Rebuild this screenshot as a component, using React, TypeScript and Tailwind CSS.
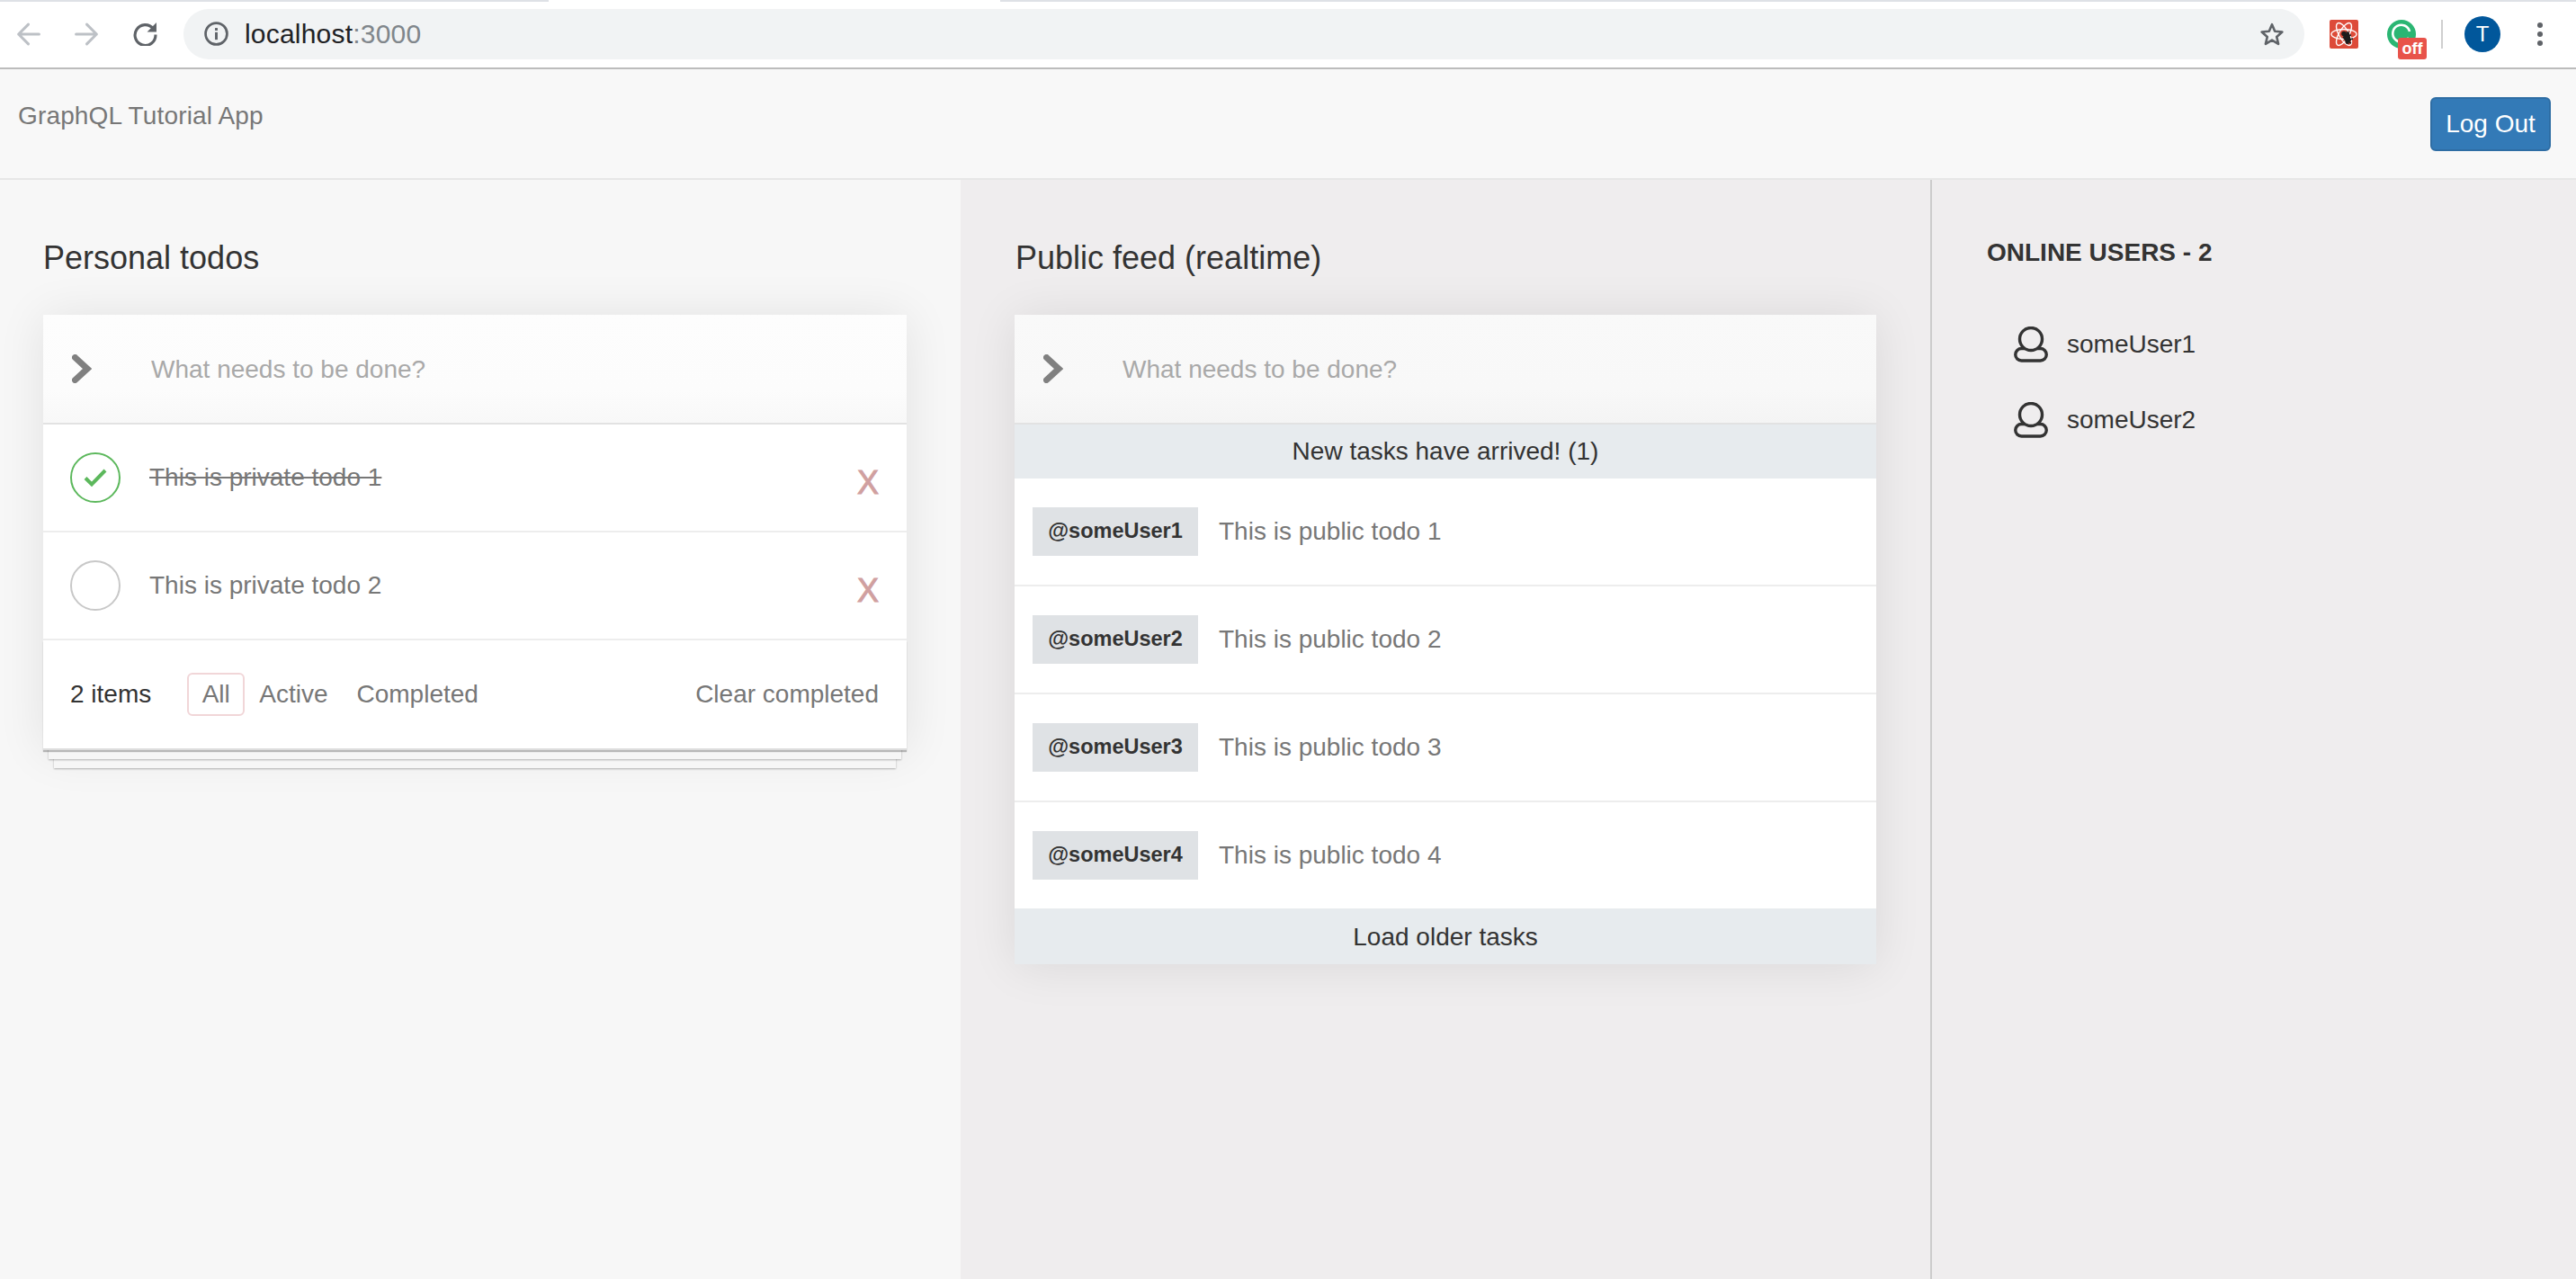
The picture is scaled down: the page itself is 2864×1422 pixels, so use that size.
import { useState } from "react";

const font = "font-['Liberation_Sans',Arial,sans-serif]";

const cardShadow = "shadow-[0_2px_50px_rgba(0,0,0,0.09)]";

function ChevronMark() {
  return (
    <svg width="22" height="32" viewBox="0 0 22 32" className="shrink-0">
      <path d="M3.5 3.5 L17 16 L3.5 28.5" fill="none" stroke="#808080" strokeWidth="7" strokeLinejoin="miter" strokeLinecap="round" />
    </svg>
  );
}

function TodoInput({ bg }: { bg: string }) {
  return (
    <div className={`flex h-[122px] items-center border-b-2 border-[#e2e2e2] pl-8 ${bg}`}>
      <ChevronMark />
      <input
        readOnly
        placeholder="What needs to be done?"
        className="ml-[66px] flex-1 bg-transparent pt-[2px] text-[28px] outline-none placeholder:text-[#a9a9a9]"
      />
    </div>
  );
}

function BrowserBar() {
  return (
    <div className="shrink-0 bg-white">
      <div className="flex h-[2px]">
        <div className="w-[610px] bg-[#dee1e6]" />
        <div className="w-[502px] bg-white" />
        <div className="flex-1 bg-[#dee1e6]" />
      </div>
      <div className="flex h-[75px] items-center border-b-2 border-[#bcbcbc] pb-[2px] pl-[18px]">
        <svg width="27" height="26" viewBox="0 0 24 24" fill="none" stroke="#bdc1c6" strokeWidth="2.8" strokeLinecap="round" strokeLinejoin="round">
          <path d="M23 12H2M12 2 2 12l10 10" />
        </svg>
        <svg width="27" height="26" viewBox="0 0 24 24" fill="none" stroke="#bdc1c6" strokeWidth="2.8" strokeLinecap="round" strokeLinejoin="round" className="ml-[38px]">
          <path d="M1 12h21M12 2l10 10-10 10" />
        </svg>
        <svg width="27" height="27" viewBox="0 0 26 26" fill="none" className="ml-[38px]">
          <path d="M21.5 7.5A11 11 0 1 0 24 14" stroke="#5f6368" strokeWidth="3" />
          <path d="M25 1v10H15z" fill="#5f6368" />
        </svg>
        <div className="ml-[29px] flex h-[56px] w-[2358px] items-center rounded-full bg-[#f1f3f4] pl-[23px] pr-[22px]">
          <svg width="27" height="27" viewBox="0 0 26 26" fill="none">
            <circle cx="13" cy="13" r="11.5" stroke="#5f6368" strokeWidth="2.6" />
            <rect x="11.6" y="11.4" width="2.8" height="8" fill="#5f6368" />
            <rect x="11.6" y="6.8" width="2.8" height="2.8" fill="#5f6368" />
          </svg>
          <span className="ml-[18px] text-[30px] leading-none tracking-[0.2px] text-[#202124]">
            localhost<span className="text-[#80868b]">:3000</span>
          </span>
          <svg width="28" height="28" viewBox="0 0 28 28" fill="none" className="ml-auto">
            <path d="M14 3.2l3.2 7.6 8.2.7-6.2 5.4 1.9 8-7.1-4.3-7.1 4.3 1.9-8-6.2-5.4 8.2-.7z" stroke="#5f6368" strokeWidth="2.6" strokeLinejoin="round" />
          </svg>
        </div>
        <svg width="32" height="32" viewBox="0 0 32 32" className="ml-[28px]">
          <rect width="32" height="32" rx="2" fill="#dd4b39" />
          <g fill="none" stroke="#fff" strokeWidth="1.4">
            <ellipse cx="16" cy="16" rx="14" ry="5.5" />
            <ellipse cx="16" cy="16" rx="14" ry="5.5" transform="rotate(60 16 16)" />
            <ellipse cx="16" cy="16" rx="14" ry="5.5" transform="rotate(120 16 16)" />
          </g>
          <circle cx="16" cy="15.5" r="2.8" fill="#1c1c1c" />
          <path d="M15 19l6 8M21 14l2 9-4 3-3-8z" fill="#1c1c1c" stroke="#1c1c1c" strokeWidth="1.5" />
          <path d="M24 17l-6 1M26 21l-8 2M24 26l-6-3M19 13l2 4" stroke="#1c1c1c" strokeWidth="1.5" />
        </svg>
        <div className="relative ml-[32px] h-[32px] w-[32px] rounded-full bg-[#2bb673]">
          <svg width="32" height="32" viewBox="0 0 32 32" fill="none">
            <path d="M24 20A9.5 9.5 0 1 1 25 13" stroke="#fff" strokeWidth="2.6" />
          </svg>
          <span className="absolute left-[12px] top-[20px] flex h-[24px] w-[32px] items-center justify-center rounded-[3px] bg-[#e8534a] text-[18px] font-bold leading-none text-white">
            off
          </span>
        </div>
        <div className="ml-[28px] h-[32px] w-[2px] bg-[#cfcfcf]" />
        <div className="ml-[24px] flex h-[40px] w-[40px] items-center justify-center rounded-full bg-[#01579b] text-[24px] leading-none text-white">
          T
        </div>
        <div className="ml-[41px] flex flex-col gap-[4px]">
          <span className="h-[6px] w-[6px] rounded-full bg-[#5f6368]" />
          <span className="h-[6px] w-[6px] rounded-full bg-[#5f6368]" />
          <span className="h-[6px] w-[6px] rounded-full bg-[#5f6368]" />
        </div>
      </div>
    </div>
  );
}

function TodoRow({ text, done }: { text: string; done: boolean }) {
  return (
    <li className="flex h-[120px] items-center border-b-2 border-[#ededed] pl-[30px] pr-[31px]">
      <span
        className={`flex h-[56px] w-[56px] shrink-0 items-center justify-center rounded-full border-2 ${
          done ? "border-[#5cb85c]" : "border-[#c8c8c8]"
        }`}
      >
        {done && (
          <svg width="26" height="21" viewBox="0 0 26 21" fill="none">
            <path d="M2 10.5l7 7L24 2" stroke="#5cb85c" strokeWidth="4" />
          </svg>
        )}
      </span>
      <span className={`ml-8 text-[28px] leading-none text-[#777] ${done ? "line-through" : ""}`}>{text}</span>
      <span className="ml-auto mt-3 text-[36px] leading-none text-[#d0a0a0] [-webkit-text-stroke:1px_#d0a0a0]">X</span>
    </li>
  );
}

function PersonalTodos() {
  const [filter] = useState("All");
  const filters = ["All", "Active", "Completed"];
  return (
    <section className="w-[1068px] shrink-0 bg-[#f7f7f7] pl-[48px] pr-[60px] pt-[67px]">
      <h3 className="h-[40px] text-[36px] leading-[40px] text-[#333]">Personal todos</h3>
      <div className={`mt-[43px] bg-white ${cardShadow}`}>
        <TodoInput bg="bg-gradient-to-b from-[#fdfdfd] via-[#fcfcfc] via-70% to-[#f8f8f8]" />
        <ul>
          <TodoRow text="This is private todo 1" done />
          <TodoRow text="This is private todo 2" done={false} />
        </ul>
        <div className="flex h-[122px] items-center border-b-2 border-[#dddddd] bg-white pl-[30px] pr-[31px] shadow-[0_2px_1px_rgba(0,0,0,0.25),0_16px_0_-6px_#f6f6f6,0_17px_2px_-6px_rgba(0,0,0,0.28),0_32px_0_-12px_#f6f6f6,0_33px_2px_-12px_rgba(0,0,0,0.28)]">
          <span className="text-[28px] leading-none text-[#333]">2 items</span>
          <ul className="ml-10 flex items-center text-[28px] leading-none text-[#777]">
            {filters.map((f) => (
              <li
                key={f}
                className={`flex h-[48px] items-center ${
                  f === filter ? "w-[64px] justify-center rounded-[6px] border-2 border-[#f1d6d8]" : "px-4"
                }`}
              >
                {f}
              </li>
            ))}
          </ul>
          <span className="ml-auto text-[28px] leading-none text-[#777]">Clear completed</span>
        </div>
      </div>
    </section>
  );
}

function PublicFeed() {
  const rows = [1, 2, 3, 4];
  return (
    <section className="w-[1080px] shrink-0 border-r-2 border-[#cccccc] pl-[60px] pr-[60px] pt-[67px]">
      <h3 className="h-[40px] pl-px text-[36px] leading-[40px] text-[#333]">Public feed (realtime)</h3>
      <div className={`mt-[43px] bg-white ${cardShadow}`}>
        <TodoInput bg="bg-gradient-to-b from-[#f9f9f9] via-[#f8f8f8] via-70% to-[#f4f4f4]" />
        <div className="flex h-[60px] items-center justify-center bg-[#e7ebee] text-[28px] text-[#333]">
          New tasks have arrived! (1)
        </div>
        <ul>
          {rows.map((n) => (
            <li
              key={n}
              className={`flex items-center pl-5 ${n < 4 ? "h-[120px] border-b-2 border-[#ededed]" : "h-[118px]"}`}
            >
              <span className="flex h-[54px] w-[184px] shrink-0 items-center justify-center bg-[#dfe2e5] text-[23.5px] font-bold leading-none text-[#333]">
                @someUser{n}
              </span>
              <span className="ml-[23px] text-[28px] leading-none text-[#777]">This is public todo {n}</span>
            </li>
          ))}
        </ul>
        <div className="flex h-[62px] items-center justify-center bg-[#e7ebee] pt-[2px] text-[28px] text-[#333]">
          Load older tasks
        </div>
      </div>
    </section>
  );
}

function UserIcon() {
  return (
    <svg width="40" height="40" viewBox="0 0 40 40" fill="none" stroke="#333" strokeWidth="3.4" className="shrink-0">
      <circle cx="20" cy="14" r="12.5" />
      <path d="M13.5 24.5H9.5A6.75 6.75 0 0 0 9.5 38H30.5A6.75 6.75 0 0 0 30.5 24.5H26.5" />
    </svg>
  );
}

function OnlineUsers() {
  const users = ["someUser1", "someUser2"];
  return (
    <aside className="flex-1 pl-[61px] pt-[65px]">
      <div className="text-[28px] font-bold leading-8 text-[#333]">ONLINE USERS - 2</div>
      <ul className="mt-[66px] flex flex-col gap-[44px] pl-[29px]">
        {users.map((u) => (
          <li key={u} className="flex h-[40px] items-center">
            <UserIcon />
            <span className="ml-5 text-[28px] leading-none text-[#333]">{u}</span>
          </li>
        ))}
      </ul>
    </aside>
  );
}

export default function App() {
  return (
    <div className={`flex h-[1422px] w-full flex-col overflow-hidden bg-[#efedee] ${font}`}>
      <BrowserBar />
      <nav className="flex h-[123px] shrink-0 items-start justify-between border-b-2 border-[#e7e7e7] bg-[#f8f8f8] pl-5 pr-7">
        <span className="pt-[37px] text-[28px] leading-[30px] tracking-[0.15px] text-[#777]">GraphQL Tutorial App</span>
        <button className="mt-[31px] h-[60px] w-[134px] rounded-[6px] border-2 border-[#2e6da4] bg-[#337ab7] text-[28px] text-white">
          Log Out
        </button>
      </nav>
      <main className="flex flex-1">
        <PersonalTodos />
        <PublicFeed />
        <OnlineUsers />
      </main>
    </div>
  );
}
